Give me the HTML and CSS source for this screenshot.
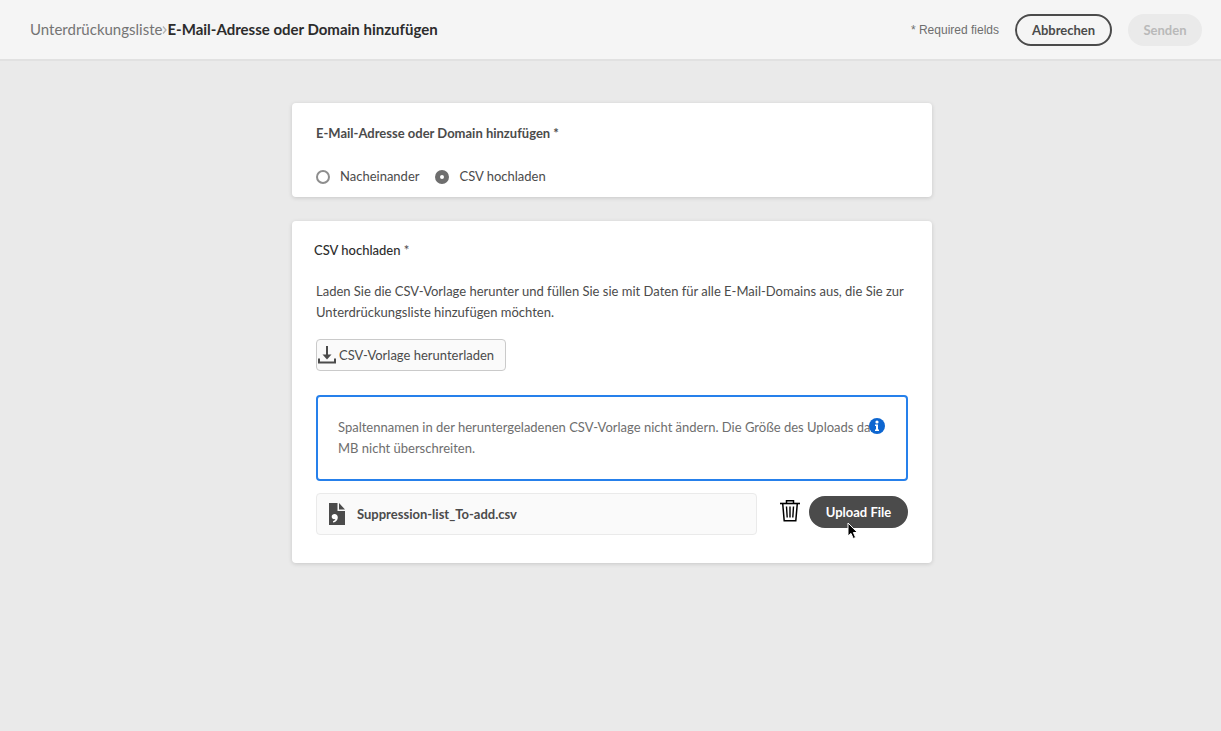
FILE: index.html
```html
<!DOCTYPE html>
<html lang="de">
<head>
<meta charset="utf-8">
<title>E-Mail-Adresse oder Domain hinzufügen</title>
<link rel="stylesheet" href="styles.css">
</head>
<body>
<header class="topbar">
  <nav class="crumbs"><a href="#">Unterdrückungsliste</a><svg class="chevron" width="5" height="10" viewBox="0 0 5 10"><path d="M1 1.500L4 5L1 8.500" fill="none" stroke="#b3b3b3" stroke-width="1.300"/></svg><h1>E-Mail-Adresse oder Domain hinzufügen</h1></nav>
  <div class="actions">
    <span class="required">* Required fields</span>
    <button class="btn btn-outline" type="button">Abbrechen</button>
    <button class="btn btn-disabled" type="button" disabled>Senden</button>
  </div>
</header>
<main class="content">
  <section class="card card-mode">
    <h2 id="mode-title">E-Mail-Adresse oder Domain hinzufügen *</h2>
    <div class="radios" role="radiogroup" aria-labelledby="mode-title">
      <label class="radio"><input type="radio" name="mode">Nacheinander</label>
      <label class="radio"><input type="radio" name="mode" checked>CSV hochladen</label>
    </div>
  </section>
  <section class="card card-upload">
    <h3>CSV hochladen <span class="star">*</span></h3>
    <p class="intro">Laden Sie die CSV-Vorlage herunter und füllen Sie sie mit Daten für alle E-Mail-Domains aus, die Sie zur Unterdrückungsliste hinzufügen möchten.</p>
    <button class="template" type="button"><svg width="18" height="18" viewBox="0 0 18 18"><path d="M9 0v12M1 12.500v4h16v-4" fill="none" stroke="#4b4b4b" stroke-width="2"/><path d="M4.500 8.500h9L9 13.500z" fill="#4b4b4b"/></svg>CSV-Vorlage herunterladen</button>
    <div class="notice">
      <p>Spaltennamen in der heruntergeladenen CSV-Vorlage nicht ändern. Die Größe des Uploads darf<br>MB nicht überschreiten.</p>
      <svg class="info" width="16" height="16" viewBox="0 0 16 16"><circle cx="8" cy="8" r="8" fill="#0d66d0"/><circle cx="8" cy="4" r="1.600" fill="#fff"/><path d="M6 6.500h3v5h1V13H6v-1.500h1V8H6z" fill="#fff"/></svg>
    </div>
    <div class="file-row">
      <div class="file">
        <svg width="16" height="22" viewBox="0 0 16 22"><path d="M0 0h8.500v8H16v14H0z" fill="#4b4b4b"/><path d="M10 0v6.500h6z" fill="#4b4b4b"/><path d="M5.500 11c2 0 3.300 1.400 3.300 3.500 0 2.600-1.700 4.600-4.800 5v-1.200c1.400-.4 2.200-1.200 2.300-2.200-2 .6-3.600-.6-3.600-2.400C2.700 12 4 11 5.500 11z" fill="#fff"/></svg>
        <span>Suppression-list_To-add.csv</span>
      </div>
      <button class="trash" type="button" aria-label="Löschen"><svg width="20" height="22" viewBox="0 0 20 22" fill="none" stroke="#000"><path d="M0 3.500h20" stroke-width="1.600"/><path d="M6.500 3V.8h7V3M2.700 3.500l1.500 17.200h11.600l1.500-17.200" stroke-width="1.500"/><path d="M6.500 6.500l.7 11M10 6.500v11M13.500 6.500l-.7 11" stroke-width="1.400"/></svg></button>
      <div class="upload">
        <button class="btn btn-dark" type="button">Upload File</button>
        <svg class="cursor" width="12" height="18" viewBox="0 0 12 18"><path d="M1 1v13l3-2.600 2.200 5.100 2.400-1-2.200-5h4z" fill="#000" stroke="#fff"/></svg>
      </div>
    </div>
  </section>
</main>
</body>
</html>
```
FILE: styles.css
```css
* { box-sizing: border-box; }
body {
  margin: 0;
  min-height: 100vh;
  background: #eaeaea;
  color: #4b4b4b;
  font: 13px/21px Lato, sans-serif;
}
h1, h2, h3, p { margin: 0; }
button { font: inherit; color: inherit; cursor: pointer; }
.topbar {
  display: flex;
  justify-content: space-between;
  align-items: center;
  height: 61px;
  padding: 0 19px 0 30px;
  background: #f5f5f5;
  border-bottom: 2px solid #e1e1e1;
}
.crumbs { display: flex; align-items: center; font-size: 15px; }
.crumbs a { color: #747474; text-decoration: none; }
.crumbs h1 { color: #2c2c2c; font-size: 15px; line-height: 21px; font-weight: 700; }
.actions { display: flex; align-items: center; gap: 16px; }
.required { font: 12px/16px "Liberation Sans", Arial, sans-serif; color: #6e6e6e; }
.btn {
  height: 32px;
  padding: 0 12px;
  border: 2px solid #4b4b4b;
  border-radius: 16px;
  background: transparent;
  line-height: 18px;
  font-weight: 700;
  white-space: nowrap;
}
.btn-outline { min-width: 97px; }
.btn-disabled { min-width: 74px; background: #eaeaea; border-color: #eaeaea; color: #b9b9b9; }
.btn-dark { min-width: 99px; background: #4b4b4b; color: #fff; }
.content {
  display: flex;
  flex-direction: column;
  align-items: center;
  gap: 24px;
  padding: 42px 16px 24px 19px;
}
.card {
  width: 100%;
  max-width: 640px;
  border-radius: 4px;
  background: #fff;
  box-shadow: 0 1px 4px rgba(0, 0, 0, 0.15);
}
.card-mode { padding: 20px 24px 10px; }
.card h2 { font-size: 13px; line-height: 21px; font-weight: 700; }
.radios { display: flex; gap: 16px; margin-top: 22px; }
.radio { display: flex; align-items: center; gap: 10px; }
.radio input {
  appearance: none;
  width: 14px;
  height: 14px;
  margin: 0;
  border: 2px solid #8e8e8e;
  border-radius: 50%;
  background: #fff;
}
.radio input:checked { border: 5px solid #6e6e6e; }
.card-upload { padding: 19px 24px 28px; }
.card h3 { margin-left: -2px; color: #2c2c2c; font-size: 13px; line-height: 21px; font-weight: 500; }
.star { color: #4b4b4b; }
.intro { margin-top: 20px; }
.template {
  display: flex;
  align-items: center;
  gap: 3px;
  min-width: 190px;
  height: 32px;
  margin-top: 16px;
  padding: 0 1px;
  border: 1px solid #cacaca;
  border-radius: 4px;
  background: #fafafa;
}
.notice {
  position: relative;
  margin-top: 24px;
  padding: 20px;
  border: 2px solid #2680eb;
  border-radius: 4px;
  color: #6e6e6e;
}
.info { position: absolute; top: 21px; right: 21px; }
.notice p { white-space: nowrap; }
.file-row { display: flex; align-items: center; margin-top: 12px; }
.file {
  display: flex;
  flex: 1;
  align-items: center;
  gap: 12px;
  height: 42px;
  padding: 0 12px;
  border: 1px solid #eaeaea;
  border-radius: 4px;
  background: #fafafa;
  font-weight: 700;
}
.trash { display: flex; margin: 0 9px 6px 23px; padding: 0; border: 0; background: none; }
.upload { position: relative; display: flex; margin-bottom: 4px; }
.cursor { position: absolute; left: 38px; top: 26px; }
```
